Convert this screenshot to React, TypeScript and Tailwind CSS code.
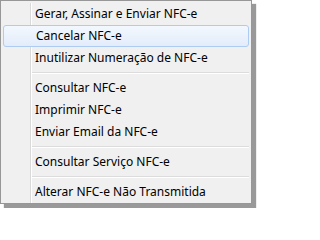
import React from "react";

type Entry = { kind: "item"; label: string; active?: boolean } | { kind: "sep" };

const entries: Entry[] = [
  { kind: "item", label: "Gerar, Assinar e Enviar NFC-e" },
  { kind: "item", label: "Cancelar NFC-e", active: true },
  { kind: "item", label: "Inutilizar Numeração de NFC-e" },
  { kind: "sep" },
  { kind: "item", label: "Consultar NFC-e" },
  { kind: "item", label: "Imprimir NFC-e" },
  { kind: "item", label: "Enviar Email da NFC-e" },
  { kind: "sep" },
  { kind: "item", label: "Consultar Serviço NFC-e" },
  { kind: "sep" },
  { kind: "item", label: "Alterar NFC-e Não Transmitida" },
];

function Gutter() {
  return (
    <div className="flex h-full shrink-0">
      <div className="w-[27px]" />
      <div className="w-px bg-[#d9d9d9]" />
      <div className="w-px bg-white" />
    </div>
  );
}

export default function App() {
  return (
    <div className="w-[256px] h-[208px] bg-white">
      <div
        className="w-[252px] h-[204px] border border-[#979797] bg-[#f0f0f0] px-[2px] pt-[2px] shadow-[4px_4px_1px_rgba(0,0,0,0.4)] flex flex-col text-[12px] text-black"
        style={{ fontFamily: '"Segoe UI", "Noto Sans", "Open Sans", sans-serif' }}
      >
        {entries.map((e, i) =>
          e.kind === "sep" ? (
            <div key={i} className="flex h-[8px]">
              <Gutter />
              <div className="flex-1 flex flex-col pt-[3px]">
                <div className="h-px bg-[#dcdcdc]" />
                <div className="h-px bg-white" />
              </div>
            </div>
          ) : e.active ? (
            <div
              key={i}
              className="flex items-center h-[22px] rounded-[3px] border border-[#aeccf1] bg-gradient-to-b from-[#f3f8fe] to-[#e2ecfa] pl-[32px] leading-none"
            >
              <span className="whitespace-nowrap">{e.label}</span>
            </div>
          ) : (
            <div key={i} className="flex h-[22px] items-stretch">
              <Gutter />
              <div className="flex items-center pl-[3px] leading-none whitespace-nowrap">
                {e.label}
              </div>
            </div>
          )
        )}
      </div>
    </div>
  );
}
